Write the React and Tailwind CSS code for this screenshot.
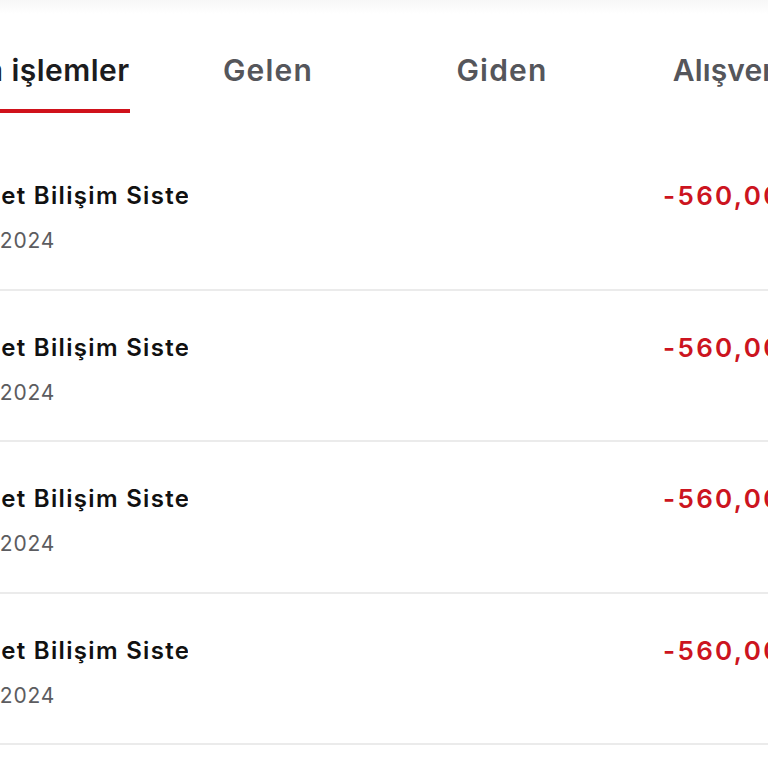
import { useState } from "react";

const rows = [
  { id: 1, title: "Türknet Bilişim Sistemleri", date: "12.01.2024", amount: "-560,00 TL" },
  { id: 2, title: "Türknet Bilişim Sistemleri", date: "12.01.2024", amount: "-560,00 TL" },
  { id: 3, title: "Türknet Bilişim Sistemleri", date: "12.01.2024", amount: "-560,00 TL" },
  { id: 4, title: "Türknet Bilişim Sistemleri", date: "12.01.2024", amount: "-560,00 TL" },
];

const tabs = [
  { label: "Tüm işlemler", track: "tracking-[0.015em]" },
  { label: "Gelen", track: "tracking-[0.04em]" },
  { label: "Giden", track: "tracking-[0.04em]" },
  { label: "Alışveriş", track: "tracking-[0.005em]" },
];

export default function App() {
  const [active, setActive] = useState(0);

  return (
    <div className="w-[768px] h-[768px] overflow-hidden bg-white font-['Inter',sans-serif]">
      <div className="h-[14px] bg-gradient-to-b from-[#f7f7f7] to-white" />

      {/* tabs */}
      <div className="flex -ml-[83px] pt-[38px]">
        {tabs.map((tab, i) => (
          <button
            key={tab.label}
            onClick={() => setActive(i)}
            className="w-[234px] shrink-0 flex justify-center"
          >
            <span className="inline-flex flex-col">
              <span
                className={
                  "text-[30px] leading-[36px] font-semibold whitespace-nowrap " +
                  tab.track +
                  " " +
                  (active === i ? "text-[#1c1c1e]" : "text-[#55565b]")
                }
              >
                {tab.label}
              </span>
              <span
                className={
                  "mt-[21px] h-[4px] " + (active === i ? "bg-[#d0121b]" : "bg-transparent")
                }
              />
            </span>
          </button>
        ))}
      </div>

      {/* list */}
      <div className="mt-[26px]">
        {rows.map((row) => (
          <div
            key={row.id}
            className="flex pt-[42px] pb-[34.5px] border-b-2 border-[#ebebeb]"
          >
            <div className="w-[663px] shrink-0">
              <div className="w-[188px] overflow-hidden whitespace-nowrap">
                <span className="block -ml-[73px] text-[24px] leading-[30px] font-semibold tracking-[0.055em] text-[#111111]">
                  {row.title}
                </span>
              </div>
              <div className="mt-[17px] -ml-[60px] text-[21px] leading-[26px] tracking-[0.04em] text-[#5c5c60] whitespace-nowrap">
                {row.date}
              </div>
            </div>
            <div className="text-[26px] leading-[30px] font-semibold tracking-[0.09em] text-[#cc1420] whitespace-nowrap">
              {row.amount}
            </div>
          </div>
        ))}
      </div>
    </div>
  );
}
